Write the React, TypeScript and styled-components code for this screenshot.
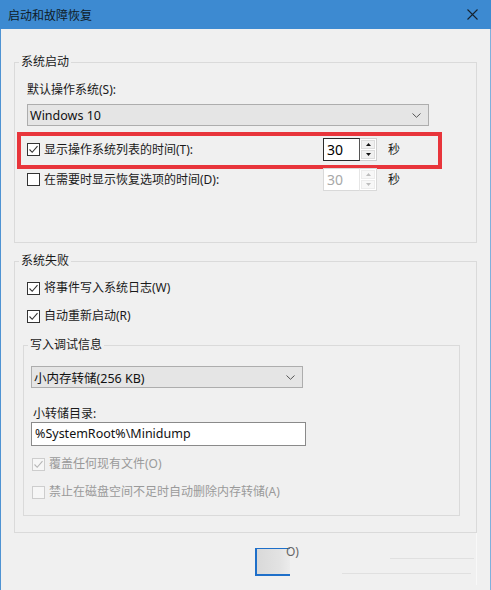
import React from "react";
import styled, { createGlobalStyle } from "styled-components";

const Global = createGlobalStyle`
  html, body { margin: 0; padding: 0; background: #f0f0f0; }
  body {
    font-family: "Noto Sans", "Noto Sans CJK SC", sans-serif;
    font-size: 12px;
    color: #000;
  }
  * { box-sizing: border-box; }
`;

const Window = styled.div`
  width: 491px;
  height: 590px;
  display: flex;
  flex-direction: column;
  background: #f0f0f0;
  overflow: hidden;
`;

const TitleBar = styled.div`
  height: 29px;
  flex: none;
  background: #3d8ad1;
  display: flex;
  align-items: center;
  justify-content: space-between;
  padding: 0 13px 0 8px;
`;

const Title = styled.div`
  font-family: "Noto Sans CJK SC", sans-serif;
  font-size: 12px;
  line-height: 16px;
  color: #0f1b27;
  margin-top: 1px;
`;

const CloseIcon = styled.svg`
  width: 11px;
  height: 11px;
  display: block;
`;

const Body = styled.div`
  flex: 1;
  display: flex;
  flex-direction: column;
  padding: 33px 13px 0 13px;
  border-left: 1px solid #4f93d3;
  border-right: 1px solid #7fb0dc;
`;

const GroupBox = styled.div<{ $pad: string; $mt?: number }>`
  border: 1px solid #dadada;
  display: flex;
  flex-direction: column;
  align-items: flex-start;
  padding: ${(p) => p.$pad};
  margin-top: ${(p) => p.$mt ?? 0}px;
`;

const GroupTitle = styled.div<{ $offset: number }>`
  margin: -9px 0 0 ${(p) => p.$offset}px;
  padding: 0 2px;
  height: 16px;
  line-height: 16px;
  background: #f0f0f0;
  color: #1a1a1a;
`;

const FieldLabel = styled.div<{ $mt: number; $ml?: number }>`
  margin: ${(p) => p.$mt}px 0 0 ${(p) => p.$ml ?? 0}px;
  line-height: 16px;
  height: 16px;
  color: #1a1a1a;
`;

const Combo = styled.div<{ $w: number; $mt: number }>`
  width: ${(p) => p.$w}px;
  height: 22px;
  margin-top: ${(p) => p.$mt}px;
  background: #e5e5e5;
  border: 1px solid #adadad;
  display: flex;
  align-items: center;
  justify-content: space-between;
  padding: 0 7px 0 2px;
  font-size: 12.5px;
  color: #111;
`;

const Chevron = styled.svg`
  width: 9px;
  height: 5px;
  display: block;
`;

const SpinRow = styled.div<{ $mt: number }>`
  position: relative;
  display: flex;
  align-items: center;
  height: 23px;
  margin-top: ${(p) => p.$mt}px;
`;

const Highlight = styled.div`
  position: absolute;
  left: -10px;
  top: -6px;
  width: 425px;
  height: 37px;
  border: 4px solid #e8353b;
  pointer-events: none;
`;

const CheckRow = styled.div<{ $mt: number; $ml?: number; $w?: number }>`
  display: flex;
  align-items: center;
  gap: 4px;
  height: 16px;
  margin: ${(p) => p.$mt}px 0 0 ${(p) => p.$ml ?? 0}px;
  width: ${(p) => (p.$w ? `${p.$w}px` : "auto")};
  flex: none;
`;

const Box = styled.div<{ $disabled?: boolean }>`
  width: 13px;
  height: 13px;
  flex: none;
  border: 1px solid ${(p) => (p.$disabled ? "#cdcdcd" : "#333")};
  background: ${(p) => (p.$disabled ? "#f6f6f6" : "#fff")};
  display: flex;
  align-items: center;
  justify-content: center;
`;

const CheckText = styled.span<{ $disabled?: boolean }>`
  color: ${(p) => (p.$disabled ? "#9a9a9a" : "#1a1a1a")};
  line-height: 16px;
  white-space: nowrap;
`;

const Spin = styled.div<{ $disabled?: boolean }>`
  display: flex;
  width: 54px;
  height: 23px;
  flex: none;
  border: 1px solid ${(p) => (p.$disabled ? "#d9d9d9" : "#cfcfcf")};
  background: #fff;
`;

const SpinEdit = styled.div<{ $disabled?: boolean }>`
  width: 37px;
  height: 23px;
  margin: -1px 0 -1px -1px;
  border: 1px solid ${(p) => (p.$disabled ? "#d9d9d9" : "#2a2a2a")};
  border-right-color: ${(p) => (p.$disabled ? "#e6e6e6" : "#555")};
  font-size: 14px;
  line-height: 21px;
  padding-left: 3px;
  color: ${(p) => (p.$disabled ? "#a8a8a8" : "#000")};
  background: #fff;
`;

const SpinButtons = styled.div`
  flex: 1;
  display: flex;
  flex-direction: column;
  padding: 1px;
  gap: 1px;
`;

const SpinBtn = styled.div<{ $disabled?: boolean }>`
  flex: 1;
  display: flex;
  align-items: center;
  justify-content: center;
  background: ${(p) => (p.$disabled ? "#f7f7f7" : "#f0f0f0")};
  border: 1px solid ${(p) => (p.$disabled ? "#ececec" : "#dcdcdc")};
`;

const Arrow = styled.svg`
  width: 5px;
  height: 3px;
  display: block;
`;

const Unit = styled.span`
  margin-left: 11px;
  line-height: 16px;
  color: #1a1a1a;
`;

const TextInput = styled.div`
  width: 275px;
  height: 24px;
  background: #fff;
  border: 1px solid #8a8a8a;
  padding-left: 3px;
  line-height: 22px;
  font-size: 12.5px;
  color: #111;
`;

const Footer = styled.div`
  flex: 1;
  display: flex;
  align-items: flex-start;
  padding-top: 15px;
  margin-bottom: 5px;
  border-right: 1px solid #f8f8f8;
`;

const GhostButton = styled.div`
  margin-left: 241px;
  width: 35px;
  height: 28px;
  flex: none;
  border: 2px solid #1e6fc9;
  border-top-width: 1px;
  border-right: none;
  background: linear-gradient(90deg, #d9d9d9, #e3e3e3 70%, #ececec);
`;

const GhostText = styled.span`
  margin: -4px 0 0 -4px;
  line-height: 16px;
  color: #666;
`;

const GhostLines = styled.div`
  margin-left: auto;
  display: flex;
  flex-direction: column;
  align-items: flex-end;
`;

const GhostLine = styled.div<{ $w: number; $mt: number; $mr: number }>`
  width: ${(p) => p.$w}px;
  margin: ${(p) => p.$mt}px ${(p) => p.$mr}px 0 0;
  border-top: 1px solid #e0e0e0;
`;

const CheckMark = ({ color }: { color: string }) => (
  <svg width="11" height="11" viewBox="0 0 11 11">
    <path d="M1.5 5.5 L4.2 8.3 L9.5 2.2" fill="none" stroke={color} strokeWidth="1.1" />
  </svg>
);

const Check = ({
  label,
  checked,
  disabled,
  mt,
  ml,
  w,
}: {
  label: string;
  checked?: boolean;
  disabled?: boolean;
  mt: number;
  ml?: number;
  w?: number;
}) => (
  <CheckRow $mt={mt} $ml={ml} $w={w}>
    <Box $disabled={disabled}>{checked && <CheckMark color={disabled ? "#b5b5b5" : "#333"} />}</Box>
    <CheckText $disabled={disabled}>{label}</CheckText>
  </CheckRow>
);

const SpinBox = ({ value, disabled }: { value: string; disabled?: boolean }) => {
  const c = disabled ? "#bdbdbd" : "#111";
  return (
    <Spin $disabled={disabled}>
      <SpinEdit $disabled={disabled}>{value}</SpinEdit>
      <SpinButtons>
        <SpinBtn $disabled={disabled}>
          <Arrow viewBox="0 0 5 3">
            <path d="M0 3 L2.5 0 L5 3 Z" fill={c} />
          </Arrow>
        </SpinBtn>
        <SpinBtn $disabled={disabled}>
          <Arrow viewBox="0 0 5 3">
            <path d="M0 0 L2.5 3 L5 0 Z" fill={c} />
          </Arrow>
        </SpinBtn>
      </SpinButtons>
    </Spin>
  );
};

const DropChevron = () => (
  <Chevron viewBox="0 0 9 5">
    <path d="M0.5 0.5 L4.5 4.3 L8.5 0.5" fill="none" stroke="#555" strokeWidth="1" />
  </Chevron>
);

export default function App() {
  return (
    <>
      <Global />
      <Window>
        <TitleBar>
          <Title>启动和故障恢复</Title>
          <CloseIcon viewBox="0 0 11 11">
            <path d="M0.5 0.5 L10.5 10.5 M10.5 0.5 L0.5 10.5" stroke="#16222e" strokeWidth="1.1" />
          </CloseIcon>
        </TitleBar>
        <Body>
          <GroupBox $pad="0 12px 51px 12px">
            <GroupTitle $offset={-8}>系统启动</GroupTitle>
            <FieldLabel $mt={12}>默认操作系统(S):</FieldLabel>
            <Combo $w={402} $mt={6}>
              <span>Windows 10</span>
              <DropChevron />
            </Combo>
            <SpinRow $mt={12}>
              <Highlight />
              <Check label="显示操作系统列表的时间(T):" checked mt={0} w={296} />
              <SpinBox value="30" />
              <Unit>秒</Unit>
            </SpinRow>
            <SpinRow $mt={7}>
              <Check label="在需要时显示恢复选项的时间(D):" mt={0} w={296} />
              <SpinBox value="30" disabled />
              <Unit>秒</Unit>
            </SpinRow>
          </GroupBox>

          <GroupBox $pad="0 16px 16px 8px" $mt={18}>
            <GroupTitle $offset={-4}>系统失败</GroupTitle>
            <Check label="将事件写入系统日志(W)" checked mt={11} ml={4} />
            <Check label="自动重新启动(R)" checked mt={12} ml={4} />
            <GroupBox $pad="0 12px 15px 7px" $mt={21} style={{ alignSelf: "stretch" }}>
              <GroupTitle $offset={-3}>写入调试信息</GroupTitle>
              <Combo $w={272} $mt={13}>
                <span>小内存转储(256 KB)</span>
                <DropChevron />
              </Combo>
              <FieldLabel $mt={18} $ml={2}>
                小转储目录:
              </FieldLabel>
              <TextInput>%SystemRoot%\Minidump</TextInput>
              <Check label="覆盖任何现有文件(O)" checked disabled mt={10} ml={1} />
              <Check label="禁止在磁盘空间不足时自动删除内存转储(A)" disabled mt={12} ml={1} />
            </GroupBox>
          </GroupBox>

          <Footer>
            <GhostButton />
            <GhostText>O)</GhostText>
            <GhostLines>
              <GhostLine $w={84} $mt={10} $mr={2} />
              <GhostLine $w={129} $mt={14} $mr={5} />
            </GhostLines>
          </Footer>
        </Body>
      </Window>
    </>
  );
}
